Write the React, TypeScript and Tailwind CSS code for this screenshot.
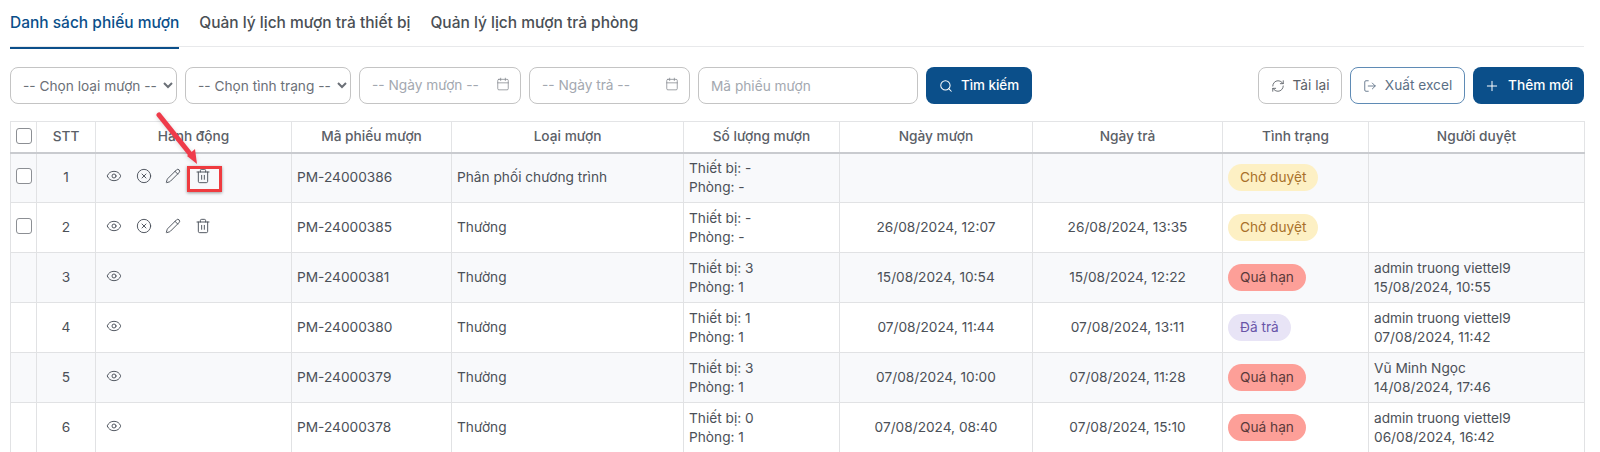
import { Calendar, CircleX, Eye, LogOut, Pencil, Plus, RefreshCw, Search, Trash2 } from 'lucide-react'

type Row = {
  stt: number
  code: string
  type: string
  device: string
  room: string
  from: string
  to: string
  status: 'wait' | 'late' | 'done'
  approver?: string
  approvedAt?: string
  editable?: boolean
}

const rows: Row[] = [
  { stt: 1, code: 'PM-24000386', type: 'Phân phối chương trình', device: '-', room: '-', from: '', to: '', status: 'wait', editable: true },
  { stt: 2, code: 'PM-24000385', type: 'Thường', device: '-', room: '-', from: '26/08/2024, 12:07', to: '26/08/2024, 13:35', status: 'wait', editable: true },
  { stt: 3, code: 'PM-24000381', type: 'Thường', device: '3', room: '1', from: '15/08/2024, 10:54', to: '15/08/2024, 12:22', status: 'late', approver: 'admin truong viettel9', approvedAt: '15/08/2024, 10:55' },
  { stt: 4, code: 'PM-24000380', type: 'Thường', device: '1', room: '1', from: '07/08/2024, 11:44', to: '07/08/2024, 13:11', status: 'done', approver: 'admin truong viettel9', approvedAt: '07/08/2024, 11:42' },
  { stt: 5, code: 'PM-24000379', type: 'Thường', device: '3', room: '1', from: '07/08/2024, 10:00', to: '07/08/2024, 11:28', status: 'late', approver: 'Vũ Minh Ngọc', approvedAt: '14/08/2024, 17:46' },
  { stt: 6, code: 'PM-24000378', type: 'Thường', device: '0', room: '1', from: '07/08/2024, 08:40', to: '07/08/2024, 15:10', status: 'late', approver: 'admin truong viettel9', approvedAt: '06/08/2024, 16:42' },
]

function StatusBadge({ status }: { status: Row['status'] }) {
  if (status === 'wait') {
    return <span className="inline-flex h-[27px] items-center rounded-full bg-[#fdf0c4] px-3 text-[13.7px] text-[#a9702a]">Chờ duyệt</span>
  }
  if (status === 'late') {
    return <span className="inline-flex h-[27px] items-center rounded-full bg-[#fd9f98] px-3 text-[13.7px] text-[#5a3a3a]">Quá hạn</span>
  }
  return <span className="inline-flex h-[27px] items-center rounded-full bg-[#e8e4f6] px-3 text-[13.7px] text-[#6a55a8]">Đã trả</span>
}

function DateField({ label, width }: { label: string; width: string }) {
  return (
    <div className={`flex h-[37px] items-center justify-between rounded-lg border border-[#c4c4c4] pl-3 pr-[10px] text-[13.7px] text-[#a3a8b0] ${width}`}>
      <span>{label}</span>
      <Calendar className="mb-1 h-[14px] w-[14px] text-[#7d8289]" strokeWidth={1.25} />
    </div>
  )
}

const th = 'border border-[#e3e4e6] border-b-2 border-b-[#c9cbcf] text-[13.7px] font-medium text-[#5b6067]'
const td = 'border border-[#e1e2e4] text-[13.7px] text-[#4b5057]'
const iconCls = 'h-4 w-4'

export default function App() {
  return (
    <main className="relative h-[452px] w-[1600px] overflow-hidden bg-white font-['Inter',sans-serif]">
      <div className="ml-[10px] mr-4 flex h-[47px] gap-5 border-b border-[#e8e9eb] text-[15.5px] font-medium">
        <div className="h-[49px] border-b-2 border-[#0b4f8a] pt-[11px] text-[#0b4f8a]">Danh sách phiếu mượn</div>
        <div className="pt-[11px] text-[#4a4f55]">Quản lý lịch mượn trả thiết bị</div>
        <div className="pt-[11px] text-[#4a4f55]">Quản lý lịch mượn trả phòng</div>
      </div>

      <div className="ml-[10px] mr-4 mt-5 flex h-[37px] items-center gap-2">
        <select className="h-[37px] w-[167px] rounded-lg border border-[#c4c4c4] bg-white pl-2 text-[13.7px] text-[#6b7077]">
          <option>-- Chọn loại mượn --</option>
        </select>
        <select className="h-[37px] w-[166px] rounded-lg border border-[#c4c4c4] bg-white pl-2 text-[13.7px] text-[#6b7077]">
          <option>-- Chọn tình trạng --</option>
        </select>
        <DateField label="-- Ngày mượn --" width="w-[162px]" />
        <DateField label="-- Ngày trả --" width="w-[161px]" />
        <input
          placeholder="Mã phiếu mượn"
          className="h-[37px] w-[220px] rounded-lg border border-[#c4c4c4] px-3 text-[13.7px] placeholder:text-[#a3a8b0]"
        />
        <button className="flex h-[37px] w-[106px] items-center justify-center gap-2 rounded-lg bg-[#0b4f8a] text-[13.4px] font-medium text-white">
          <Search className="h-[14px] w-[14px]" strokeWidth={1.75} />
          Tìm kiếm
        </button>
        <div className="ml-auto flex gap-2">
          <button className="flex h-[37px] w-[84px] items-center justify-center gap-2 rounded-lg border border-[#c4c4c4] text-[13.7px] text-[#5b6067]">
            <RefreshCw className="h-[14px] w-[14px]" strokeWidth={1.5} />
            Tải lại
          </button>
          <button className="flex h-[37px] w-[115px] items-center justify-center gap-2 rounded-lg border border-[#5f8bb5] text-[13.7px] text-[#5b6f85]">
            <LogOut className="h-[14px] w-[14px]" strokeWidth={1.5} />
            Xuất excel
          </button>
          <button className="flex h-[37px] w-[111px] items-center justify-center gap-2 rounded-lg bg-[#0b4f8a] text-[13.7px] font-medium text-white">
            <Plus className="h-4 w-4" strokeWidth={1.5} />
            Thêm mới
          </button>
        </div>
      </div>

      <table className="ml-[10px] mt-[17px] w-[1574px] table-fixed border-collapse">
        <colgroup>
          <col className="w-[26px]" />
          <col className="w-[59px]" />
          <col className="w-[196px]" />
          <col className="w-[160px]" />
          <col className="w-[232px]" />
          <col className="w-[156px]" />
          <col className="w-[193px]" />
          <col className="w-[190px]" />
          <col className="w-[146px]" />
          <col className="w-[216px]" />
        </colgroup>
        <thead>
          <tr className="h-[31px]">
            <th className={th}>
              <div className="mx-auto mb-0.5 h-4 w-4 rounded-[3px] border border-[#8c8f94] bg-white" />
            </th>
            <th className={th}>STT</th>
            <th className={th}>Hành động</th>
            <th className={th}>Mã phiếu mượn</th>
            <th className={th}>Loại mượn</th>
            <th className={th}>Số lượng mượn</th>
            <th className={th}>Ngày mượn</th>
            <th className={th}>Ngày trả</th>
            <th className={th}>Tình trạng</th>
            <th className={th}>Người duyệt</th>
          </tr>
        </thead>
        <tbody>
          {rows.map((r) => (
            <tr key={r.stt} className={r.stt % 2 === 1 ? 'h-[50px] bg-[#f8f9fb]' : 'h-[50px] bg-white'}>
              <td className={td}>
                {r.editable && <div className="mx-auto mb-1 h-4 w-4 rounded-[3px] border border-[#8c8f94] bg-white" />}
              </td>
              <td className={`${td} text-center`}>{r.stt}</td>
              <td className={`${td} pl-[10px]`}>
                <div className="mb-1 flex items-center gap-[13.6px] text-[#474d57]">
                  <Eye className={iconCls} strokeWidth={1.4} />
                  {r.editable && <CircleX className={iconCls} strokeWidth={1.4} />}
                  {r.editable && <Pencil className={iconCls} strokeWidth={1.4} />}
                  {r.editable && <Trash2 className={iconCls} strokeWidth={1.4} />}
                </div>
              </td>
              <td className={`${td} pl-[5px]`}>{r.code}</td>
              <td className={`${td} pl-[5px]`}>{r.type}</td>
              <td className={`${td} pl-[5px] leading-[19px]`}>
                <div>Thiết bị: {r.device}</div>
                <div>Phòng: {r.room}</div>
              </td>
              <td className={`${td} text-center`}>{r.from}</td>
              <td className={`${td} text-center`}>{r.to}</td>
              <td className={`${td} pl-[5px]`}>
                <StatusBadge status={r.status} />
              </td>
              <td className={`${td} pl-[5px] leading-[19px]`}>
                <div>{r.approver}</div>
                <div>{r.approvedAt}</div>
              </td>
            </tr>
          ))}
        </tbody>
      </table>

      {/* annotation over the table */}
      <div className="absolute left-[187px] top-[166px] h-[26px] w-[35px] border-[3px] border-[#ef3b3f] shadow-[0_1px_3px_rgba(0,0,0,0.4)]" />
      <svg className="absolute left-[150px] top-[108px] drop-shadow-sm" width="60" height="64" viewBox="0 0 60 64" fill="none">
        <line x1="9" y1="7" x2="41" y2="47" stroke="#ef3b4a" strokeWidth="5" strokeLinecap="round" />
        <path d="M37 48 L45 41 L47 56 Z" fill="#ef3b4a" />
      </svg>
    </main>
  )
}
